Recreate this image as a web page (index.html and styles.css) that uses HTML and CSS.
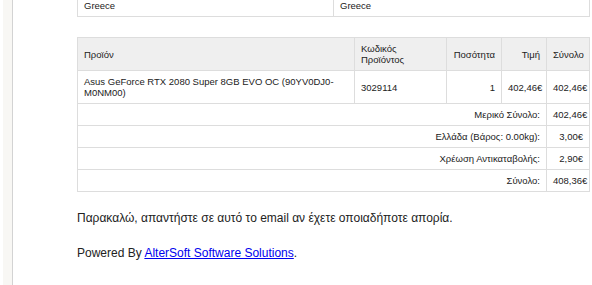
FILE: index.html
```html
<!DOCTYPE html>
<html>
<head>
<meta charset="utf-8">
<link rel="stylesheet" href="styles.css">
</head>
<body>
<div class="frame">
  <div class="gutter"></div>
  <div class="content">
    <table class="addr">
      <colgroup>
        <col class="col-addr">
        <col>
      </colgroup>
      <tr>
        <td>Greece</td>
        <td>Greece</td>
      </tr>
    </table>

    <table class="items">
      <colgroup>
        <col class="col-name">
        <col class="col-code">
        <col class="col-qty">
        <col class="col-price">
        <col>
      </colgroup>
      <thead>
        <tr>
          <th>Προϊόν</th>
          <th>Κωδικός Προϊόντος</th>
          <th class="r">Ποσότητα</th>
          <th class="r">Τιμή</th>
          <th class="r">Σύνολο</th>
        </tr>
      </thead>
      <tbody>
        <tr>
          <td>Asus GeForce RTX 2080 Super 8GB EVO OC (90YV0DJ0-M0NM00)</td>
          <td>3029114</td>
          <td class="r">1</td>
          <td class="r">402,46€</td>
          <td class="r">402,46€</td>
        </tr>
      </tbody>
      <tfoot>
        <tr>
          <td colspan="4" class="r">Μερικό Σύνολο:</td>
          <td class="r">402,46€</td>
        </tr>
        <tr>
          <td colspan="4" class="r">Ελλάδα (Βάρος: 0.00kg):</td>
          <td class="r">3,00€</td>
        </tr>
        <tr>
          <td colspan="4" class="r">Χρέωση Αντικαταβολής:</td>
          <td class="r">2,90€</td>
        </tr>
        <tr>
          <td colspan="4" class="r">Σύνολο:</td>
          <td class="r">408,36€</td>
        </tr>
      </tfoot>
    </table>

    <p class="note">Παρακαλώ, απαντήστε σε αυτό το email αν έχετε οποιαδήποτε απορία.</p>
    <p class="note">Powered By <a href="#">AlterSoft Software Solutions</a>.</p>
  </div>
</div>
</body>
</html>
```
FILE: styles.css
```css
html, body {
  margin: 0;
  padding: 0;
  background: #ffffff;
}
body {
  font-family: "Liberation Sans", Arial, sans-serif;
  color: #222222;
}
.frame {
  display: flex;
  min-height: 285px;
}
.gutter {
  width: 9px;
  margin-left: 3px;
  background: #f8f7f4;
  border-right: 1px solid #d3d3d3;
  flex: none;
}
.content {
  flex: 1;
  padding: 0 2px 0 64px;
}
table {
  border-collapse: collapse;
  table-layout: fixed;
  width: 100%;
  font-size: 9.5px;
  line-height: 11px;
}
.col-addr { width: 256px; }
.col-name { width: 277px; }
.col-code { width: 92px; }
.col-qty { width: 55px; }
.col-price { width: 45px; }
.addr {
  border-left: 1px solid #dddddd;
  border-bottom: 1px solid #dddddd;
  margin-bottom: 20px;
}
.addr td {
  padding: 0 6px 5px;
  border-right: 1px solid #dddddd;
  text-align: left;
  vertical-align: top;
}
.items {
  border-top: 1px solid #dddddd;
  border-left: 1px solid #dddddd;
}
.items th,
.items td {
  border-right: 1px solid #dddddd;
  border-bottom: 1px solid #dddddd;
  padding: 5px 6px;
  text-align: left;
  vertical-align: middle;
  font-weight: normal;
}
.items th {
  background: #efefef;
  color: #222222;
}
.items .r {
  text-align: right;
}
.note {
  font-size: 12px;
  line-height: 14px;
  margin: 19px 0 0;
  color: #222222;
}
.note + .note {
  margin-top: 21px;
}
.note a {
  color: #0000ee;
  text-decoration: underline;
}
```
